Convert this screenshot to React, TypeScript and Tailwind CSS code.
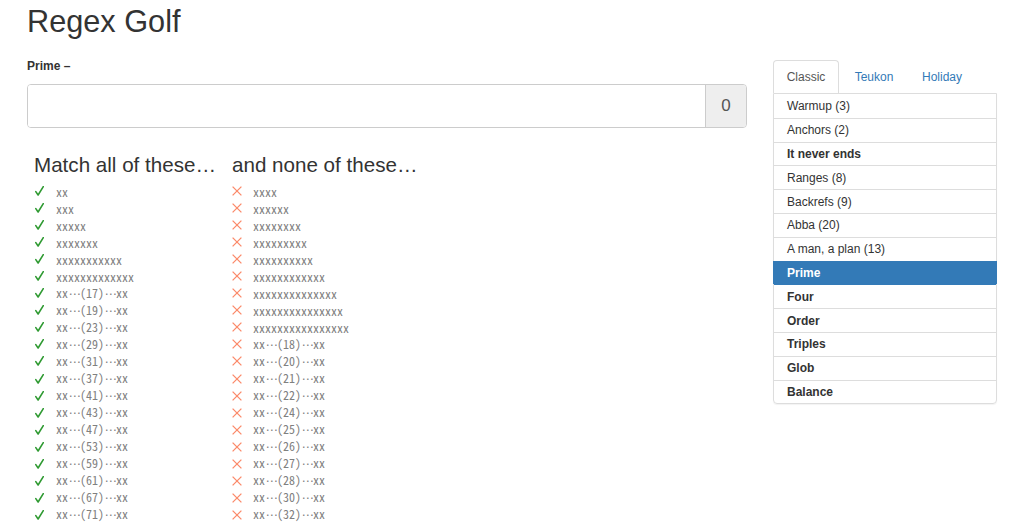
import React from "react";

const matchItems: string[] = [
  "xx",
  "xxx",
  "xxxxx",
  "xxxxxxx",
  "x".repeat(11),
  "x".repeat(13),
  ...[17, 19, 23, 29, 31, 37, 41, 43, 47, 53, 59, 61, 67, 71].map((n) => `xx…(${n})…xx`),
];

const noneItems: string[] = [
  ...[4, 6, 8, 9, 10, 12, 14, 15, 16].map((n) => "x".repeat(n)),
  ...[18, 20, 21, 22, 24, 25, 26, 27, 28, 30, 32].map((n) => `xx…(${n})…xx`),
];

const levels: { name: string; bold?: boolean; active?: boolean }[] = [
  { name: "Warmup (3)" },
  { name: "Anchors (2)" },
  { name: "It never ends", bold: true },
  { name: "Ranges (8)" },
  { name: "Backrefs (9)" },
  { name: "Abba (20)" },
  { name: "A man, a plan (13)" },
  { name: "Prime", bold: true, active: true },
  { name: "Four", bold: true },
  { name: "Order", bold: true },
  { name: "Triples", bold: true },
  { name: "Glob", bold: true },
  { name: "Balance", bold: true },
];

const mono = { fontFamily: '"Noto Sans Mono CJK JP", "Liberation Mono", monospace' };

function Check() {
  return (
    <svg width="9" height="10" viewBox="0 0 9 10" className="block">
      <path d="M0.8 5.6 L3.1 9 L8.3 0.6" fill="none" stroke="#2f9a32" strokeWidth="1.6" strokeLinecap="round" strokeLinejoin="round" />
    </svg>
  );
}

function Cross() {
  return (
    <svg width="10" height="10" viewBox="0 0 10 10" className="block">
      <path d="M0.6 0.6 L9.4 9.4 M9.4 0.6 L0.6 9.4" fill="none" stroke="#fb8a6a" strokeWidth="1.3" />
    </svg>
  );
}

function Ellipsis() {
  return (
    <span
      className="inline-block w-[12px] text-center text-[12px] tracking-[-1px]"
      style={{ fontFamily: '"DejaVu Sans", sans-serif' }}
    >
      ⋯
    </span>
  );
}

function Row({ text, ok }: { text: string; ok: boolean }) {
  const parts = text.split("…");
  return (
    <div className="flex h-[17.05px] items-center">
      <div className={ok ? "w-[22px] pl-[1px]" : "w-[21px]"}>{ok ? <Check /> : <Cross />}</div>
      <div className="text-[12px] leading-[17px] text-[#808080] whitespace-pre" style={mono}>
        {parts.map((p, i) => (
          <React.Fragment key={i}>
            {i > 0 && <Ellipsis />}
            {p}
          </React.Fragment>
        ))}
      </div>
    </div>
  );
}

export default function App() {
  return (
    <div
      className="w-[1024px] h-[528px] overflow-hidden bg-white text-[#333]"
      style={{ fontFamily: '"Liberation Sans", Arial, sans-serif' }}
    >
      <div className="flex gap-[26px] px-[27px]">
        <div className="w-[720px]">
          <h1 className="mt-[5px] h-[34px] text-[30.7px] leading-[34px] font-normal text-[#333]">Regex Golf</h1>
          <div className="mt-[19px] text-[12px] leading-[17px] font-bold text-[#333]">Prime –</div>
          <div className="mt-[9px] flex h-[44px] rounded-[4px] border border-[#ccc] overflow-hidden">
            <div className="flex-1 bg-white" />
            <div className="flex w-[41px] items-center justify-center border-l border-[#ccc] bg-[#eee] text-[17px] text-[#555]">
              0
            </div>
          </div>
          <div className="mt-[25px] ml-[7px] flex">
            <div className="w-[198px]">
              <div className="h-[23px] text-[20.6px] leading-[23px] text-[#333]">Match all of these…</div>
              <div className="mt-[6.5px]">
                {matchItems.map((t, i) => (
                  <Row key={i} text={t} ok />
                ))}
              </div>
            </div>
            <div className="w-[198px]">
              <div className="h-[23px] text-[20.6px] leading-[23px] text-[#333]">and none of these…</div>
              <div className="mt-[6.5px]">
                {noneItems.map((t, i) => (
                  <Row key={i} text={t} ok={false} />
                ))}
              </div>
            </div>
          </div>
        </div>
        <div className="w-[224px] pt-[60px]">
          <div className="flex h-[33px] text-[12px]">
            <div className="flex w-[66px] items-center justify-center rounded-t-[4px] border border-b-0 border-[#ddd] bg-white text-[#555]">
              Classic
            </div>
            <div className="ml-[2px] flex w-[66px] items-center justify-center text-[#337ab7]">Teukon</div>
            <div className="ml-[2px] flex w-[66px] items-center justify-center text-[#337ab7]">Holiday</div>
          </div>
          <div className="rounded-b-[4px] border border-[#ddd] shadow-[0_1px_1px_rgba(0,0,0,0.05)]">
            {levels.map((l, i) => {
              const prevActive = i > 0 && levels[i - 1].active;
              let cls = "flex h-[23.8px] items-center px-[13px] text-[12px] box-border ";
              if (l.active) {
                cls += "relative -mx-px px-[14px] bg-[#337ab7] text-white border-t border-[#337ab7] ";
              } else if (i > 0) {
                cls += prevActive ? "border-t border-[#337ab7] text-[#333] " : "border-t border-[#ddd] text-[#333] ";
              } else {
                cls += "text-[#333] ";
              }
              cls += l.bold ? "font-bold" : "font-normal";
              return (
                <div key={i} className={cls}>
                  {l.name}
                </div>
              );
            })}
          </div>
        </div>
      </div>
    </div>
  );
}
